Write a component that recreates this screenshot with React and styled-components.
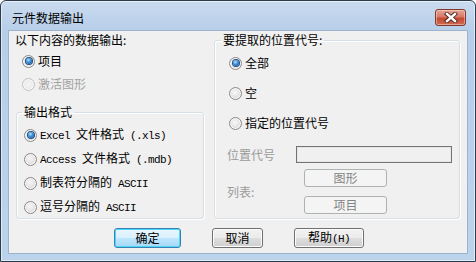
import React from "react";
import styled, { createGlobalStyle } from "styled-components";

const GlobalStyle = createGlobalStyle`
  body {
    margin: 0;
    background: #ffffff;
  }
  * {
    box-sizing: border-box;
  }
`;

const Window = styled.div`
  width: 476px;
  height: 262px;
  display: flex;
  flex-direction: column;
  border: 1px solid #2c3c4e;
  border-radius: 6px 6px 0 0;
  background: linear-gradient(180deg, #c9dbef 0px, #b7cee9 30px, #bcd3ec 100%);
  box-shadow: inset 0 0 0 1px rgba(255, 255, 255, 0.55);
  font-family: "Noto Sans CJK SC", "Noto Sans", sans-serif;
  font-size: 12px;
  line-height: 14px;
  color: #000000;
  overflow: hidden;
`;

const TitleBar = styled.div`
  height: 29px;
  flex: none;
  display: flex;
  align-items: center;
  justify-content: space-between;
  padding: 4px 9px 0 11px;
`;

const Title = styled.div`
  font-size: 12px;
  color: #000000;
`;

const CloseButton = styled.div`
  width: 31px;
  height: 17px;
  display: flex;
  align-items: center;
  justify-content: center;
  border: 1px solid #7d3a2e;
  border-radius: 3px;
  background: linear-gradient(180deg, #e5a596 0%, #d77a68 45%, #c34a33 55%, #d06a50 100%);
  box-shadow: inset 0 0 0 1px rgba(255, 220, 210, 0.5);
`;

const Frame = styled.div`
  flex: 1;
  display: flex;
  padding: 0 7px 7px 7px;
`;

const Content = styled.div`
  flex: 1;
  display: flex;
  flex-direction: column;
  background: #f0f0f0;
  border: 1px solid #9db3cc;
  padding: 2px 5px 5px 7px;
`;

const TopRow = styled.div`
  display: grid;
  grid-template-columns: 188px 246px;
  column-gap: 10px;
`;

const Column = styled.div`
  display: flex;
  flex-direction: column;
`;

const Heading = styled.div`
  height: 14px;
  margin-left: -1px;
`;

const OptionList = styled.div`
  display: flex;
  flex-direction: column;
  gap: ${(p) => p.$gap}px;
  margin-top: ${(p) => p.$top || 0}px;
  padding-left: ${(p) => p.$indent || 0}px;
`;

const GroupBox = styled.fieldset`
  margin: ${(p) => p.$top || 0}px 0 0 0;
  padding: ${(p) => p.$pad};
  border: 1px solid #d5dfe5;
  border-radius: 3px;
  box-shadow: inset 1px 1px 0 #ffffff, 1px 1px 0 #ffffff;
  min-width: 0;
  flex: 1;
  display: flex;
  flex-direction: column;
`;

const Legend = styled.legend`
  padding: 0 2px;
  margin-left: ${(p) => p.$indent}px;
  line-height: 14px;
  font-size: 12px;
`;

const RadioRow = styled.label`
  height: 16px;
  display: flex;
  align-items: center;
  gap: 3px;
  color: ${(p) => (p.$disabled ? "#a3a3a3" : "#000000")};
  white-space: nowrap;
`;

const RadioDot = styled.span`
  width: 13px;
  height: 13px;
  flex: none;
  display: inline-flex;
  align-items: center;
  justify-content: center;
  border-radius: 50%;
  border: 1px solid ${(p) => (p.$disabled ? "#c2c2c2" : "#8a8a8a")};
  background: ${(p) =>
    p.$disabled
      ? "radial-gradient(circle at 50% 50%, #f4f4f4 0%, #e6e6e6 100%)"
      : "radial-gradient(circle at 45% 40%, #f8f8f8 0%, #e2e2e2 55%, #d0d0d0 100%)"};
  box-shadow: inset 0 0 0 1px #f7f7f7;

  &::after {
    content: "";
    display: ${(p) => (p.$checked ? "block" : "none")};
    width: 6px;
    height: 6px;
    border-radius: 50%;
    background: radial-gradient(circle at 40% 35%, #b4e4ff 0%, #3b8ad6 45%, #0f4b91 100%);
    box-shadow: 0 0 0 1px #1d4f84;
  }
`;

const Mono = styled.span`
  font-family: "Liberation Mono", monospace;
  font-size: 11px;
  letter-spacing: -0.6px;
`;

const PositionGrid = styled.div`
  display: grid;
  grid-template-columns: 69px 1fr;
  align-items: center;
  row-gap: 6px;
  margin: 15px 0 0 -2px;
  color: #9a9a9a;
`;

const TextBox = styled.div`
  height: 17px;
  border: 1px solid #737373;
  background: #f0f0f0;
  box-shadow: inset 0 0 0 1px #e6e6e6;
`;

const ButtonStack = styled.div`
  display: flex;
  flex-direction: column;
  gap: 9px;
  padding-left: 8px;
`;

const Button = styled.button`
  width: ${(p) => p.$w}px;
  height: ${(p) => p.$h || 20}px;
  padding: 0;
  font-family: "Noto Sans CJK SC", "Noto Sans", sans-serif;
  font-size: 12px;
  line-height: 14px;
  border-radius: 3px;
  color: #000000;
  border: 1px solid ${(p) => (p.$default ? "#3c7fb1" : "#707070")};
  background: ${(p) =>
    p.$default
      ? "linear-gradient(180deg, #eaf6fd 0%, #d9f0fc 50%, #bee6fd 51%, #a7d9f5 100%)"
      : "linear-gradient(180deg, #f2f2f2 0%, #ebebeb 50%, #dddddd 51%, #cfcfcf 100%)"};
  box-shadow: inset 0 0 0 1px ${(p) => (p.$default ? "#48d8fb" : "#fcfcfc")};

  &:disabled {
    border-color: #adb2b5;
    background: #f4f4f4;
    box-shadow: none;
    color: #838383;
  }
`;

const ButtonRow = styled.div`
  margin-top: auto;
  display: flex;
  justify-content: center;
  gap: 31px;
`;

const Radio = ({ checked, disabled, children }) => (
  <RadioRow $disabled={disabled}>
    <RadioDot $checked={checked} $disabled={disabled} />
    <span>{children}</span>
  </RadioRow>
);

const CloseGlyph = () => (
  <svg width="14" height="11" viewBox="0 0 14 11">
    <path d="M3 2 L11 9 M11 2 L3 9" stroke="#4a2018" strokeWidth="4.2" strokeLinecap="square" />
    <path d="M3 2 L11 9 M11 2 L3 9" stroke="#ffffff" strokeWidth="2.4" strokeLinecap="square" />
  </svg>
);

export default function App() {
  return (
    <>
      <GlobalStyle />
      <Window>
        <TitleBar>
          <Title>元件数据输出</Title>
          <CloseButton>
            <CloseGlyph />
          </CloseButton>
        </TitleBar>
        <Frame>
          <Content>
            <TopRow>
              <Column>
                <Heading>以下内容的数据输出:</Heading>
                <OptionList $gap={7} $top={6} $indent={6}>
                  <Radio checked>项目</Radio>
                  <Radio disabled>激活图形</Radio>
                </OptionList>
                <GroupBox $top={13} $pad="8px 0 2px 7px">
                  <Legend $indent={-2}>输出格式</Legend>
                  <OptionList $gap={8}>
                    <Radio checked>
                      <Mono>Excel </Mono>文件格式<Mono> (.xls)</Mono>
                    </Radio>
                    <Radio>
                      <Mono>Access </Mono>文件格式<Mono> (.mdb)</Mono>
                    </Radio>
                    <Radio>
                      制表符分隔的<Mono> ASCII</Mono>
                    </Radio>
                    <Radio>
                      逗号分隔的<Mono> ASCII</Mono>
                    </Radio>
                  </OptionList>
                </GroupBox>
              </Column>
              <GroupBox $pad="8px 7px 4px 14px">
                <Legend $indent={-8}>要提取的位置代号:</Legend>
                <OptionList $gap={14}>
                  <Radio checked>全部</Radio>
                  <Radio>空</Radio>
                  <Radio>指定的位置代号</Radio>
                </OptionList>
                <PositionGrid>
                  <span>位置代号</span>
                  <TextBox />
                  <span>列表:</span>
                  <ButtonStack>
                    <Button $w={83} $h={18} disabled>
                      图形
                    </Button>
                    <Button $w={83} $h={18} disabled>
                      项目
                    </Button>
                  </ButtonStack>
                </PositionGrid>
              </GroupBox>
            </TopRow>
            <ButtonRow>
              <Button $w={67} $default>
                确定
              </Button>
              <Button $w={51}>取消</Button>
              <Button $w={70}>
                帮助<Mono>(H)</Mono>
              </Button>
            </ButtonRow>
          </Content>
        </Frame>
      </Window>
    </>
  );
}
